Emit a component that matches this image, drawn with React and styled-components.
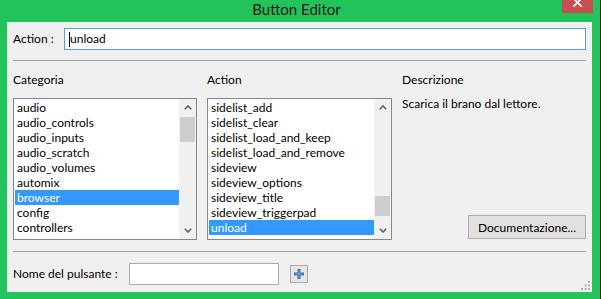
import React from 'react';
import styled, { createGlobalStyle } from 'styled-components';

const GlobalStyle = createGlobalStyle`
  html, body {
    margin: 0;
    padding: 0;
    background: #1e1e1e;
  }
  body {
    font-family: Lato, "Noto Sans", sans-serif;
    font-size: 12px;
    color: #000;
  }
`;

const categories = [
  'audio',
  'audio_controls',
  'audio_inputs',
  'audio_scratch',
  'audio_volumes',
  'automix',
  'browser',
  'config',
  'controllers',
];

const actions = [
  'sidelist_add',
  'sidelist_clear',
  'sidelist_load_and_keep',
  'sidelist_load_and_remove',
  'sideview',
  'sideview_options',
  'sideview_title',
  'sideview_triggerpad',
  'unload',
];

const Chevron = ({ down }) => (
  <svg width="8" height="5" viewBox="0 0 8 5">
    <path
      d={down ? 'M0.8 0.8 L4 4 L7.2 0.8' : 'M0.8 4.2 L4 1 L7.2 4.2'}
      fill="none"
      stroke="#606060"
      strokeWidth="1.6"
    />
  </svg>
);

const ListBox = ({ items, selected, thumbTop, thumbHeight }) => (
  <List>
    <Items>
      {items.map((it) => (
        <Item key={it} selected={it === selected}>
          {it}
        </Item>
      ))}
    </Items>
    <ScrollBar>
      <ArrowBtn>
        <Chevron />
      </ArrowBtn>
      <Track>
        <Thumb style={{ marginTop: thumbTop, height: thumbHeight }} />
      </Track>
      <ArrowBtn>
        <Chevron down />
      </ArrowBtn>
    </ScrollBar>
  </List>
);

const App = () => {
  return (
    <>
      <GlobalStyle />
      <Window>
        <TitleBar>
          <span />
          <Title>Button Editor</Title>
          <CloseBtn>
            <svg width="9" height="7" viewBox="0 0 9 7">
              <path d="M0.5 -1.5 L8.5 6.5 M8.5 -1.5 L0.5 6.5" stroke="#fff" strokeWidth="1.7" />
            </svg>
          </CloseBtn>
        </TitleBar>
        <Content>
          <Row>
            <Label width={51}>Action :</Label>
            <TextInput focused>
              <Caret />
              unload
            </TextInput>
          </Row>
          <Separator />
          <Columns>
            <Column>
              <ColLabel>Categoria</ColLabel>
              <ListBox items={categories} selected="browser" thumbTop={1} thumbHeight={25} />
            </Column>
            <Column>
              <ColLabel>Action</ColLabel>
              <ListBox items={actions} selected="unload" thumbTop={80} thumbHeight={20} />
            </Column>
            <Column>
              <ColLabel>Descrizione</ColLabel>
              <Description>Scarica il brano dal lettore.</Description>
              <Button>Documentazione...</Button>
            </Column>
          </Columns>
          <Separator />
          <Row>
            <Label width={116}>Nome del pulsante :</Label>
            <TextInput width={150} />
            <PlusBtn>
              <svg width="12" height="12" viewBox="0 0 12 12">
                <path d="M6 1 V11 M1 6 H11" stroke="#3f6fae" strokeWidth="3" />
                <path d="M6 2.5 V9.5 M2.5 6 H9.5" stroke="#7ea3d4" strokeWidth="1" />
              </svg>
            </PlusBtn>
          </Row>
          <Grip>
            <svg width="9" height="9" viewBox="0 0 9 9" fill="#b4b4b4">
              <rect x="7" y="0" width="2" height="2" />
              <rect x="3.5" y="3.5" width="2" height="2" />
              <rect x="7" y="3.5" width="2" height="2" />
              <rect x="0" y="7" width="2" height="2" />
              <rect x="3.5" y="7" width="2" height="2" />
              <rect x="7" y="7" width="2" height="2" />
            </svg>
          </Grip>
        </Content>
      </Window>
    </>
  );
};

export default App;

const Window = styled.div`
  width: 600px;
  height: 299px;
  box-sizing: border-box;
  background: #23c35b;
  padding: 0 8px 7px 7px;
  display: flex;
  flex-direction: column;
`;
const TitleBar = styled.div`
  height: 22px;
  flex-shrink: 0;
  display: grid;
  grid-template-columns: 1fr auto 1fr;
  align-items: start;
  margin: 0 -8px 0 -7px;
  padding-right: 7px;
`;
const Title = styled.div`
  font-size: 15px;
  line-height: 18px;
  color: #1a1a1a;
`;
const CloseBtn = styled.div`
  justify-self: end;
  width: 31px;
  height: 13px;
  background: #c75050;
  display: flex;
  justify-content: center;
  align-items: flex-start;
`;
const Content = styled.div`
  position: relative;
  flex: 1;
  background: #f0f0f0;
  padding: 6px 6px 7px 6px;
  display: flex;
  flex-direction: column;
`;
const Row = styled.div`
  display: flex;
  align-items: center;
  height: 22px;
`;
const Label = styled.div`
  width: ${(p) => p.width}px;
  flex-shrink: 0;
  line-height: 16px;
  white-space: nowrap;
`;
const TextInput = styled.div`
  box-sizing: border-box;
  height: 22px;
  ${(p) => (p.width ? `width: ${p.width}px;` : 'flex: 1;')}
  background: #fff;
  border: 1px solid ${(p) => (p.focused ? '#569de5' : '#abadb3')};
  display: flex;
  align-items: center;
  padding-left: 4px;
  line-height: 16px;
`;
const Caret = styled.span`
  display: inline-block;
  width: 1px;
  height: 15px;
  background: #000;
`;
const Separator = styled.div`
  height: 1px;
  background: #a0a0a0;
  margin-top: 11px;
  flex-shrink: 0;
  &:nth-of-type(2) {
    margin-top: 10px;
  }
  & + ${Row} {
    margin-top: 11px;
  }
`;
const Columns = styled.div`
  display: grid;
  grid-template-columns: 184px 185px 1fr;
  column-gap: 10px;
  margin-top: 11px;
`;
const Column = styled.div`
  display: flex;
  flex-direction: column;
  height: 168px;
`;
const ColLabel = styled.div`
  line-height: 16px;
  height: 16px;
  margin-bottom: 10px;
`;
const Description = styled.div`
  line-height: 16px;
  margin-top: -2px;
`;
const Button = styled.div`
  margin-top: auto;
  align-self: flex-end;
  box-sizing: border-box;
  width: 118px;
  height: 24px;
  margin-bottom: 1px;
  background: #e1e1e1;
  border: 1px solid #adadad;
  display: flex;
  align-items: center;
  justify-content: center;
`;
const List = styled.div`
  box-sizing: border-box;
  height: 142px;
  border: 1px solid #828790;
  background: #fff;
  display: flex;
  overflow: hidden;
`;
const Items = styled.div`
  flex: 1;
  padding: 1px 0 0 1px;
`;
const Item = styled.div`
  height: 15px;
  line-height: 15px;
  padding-left: 2px;
  white-space: nowrap;
  background: ${(p) => (p.selected ? '#3399ff' : 'transparent')};
  color: ${(p) => (p.selected ? '#fff' : '#000')};
`;
const ScrollBar = styled.div`
  width: 17px;
  flex-shrink: 0;
  background: #f0f0f0;
  display: flex;
  flex-direction: column;
`;
const ArrowBtn = styled.div`
  height: 17px;
  display: flex;
  align-items: center;
  justify-content: center;
`;
const Track = styled.div`
  flex: 1;
`;
const Thumb = styled.div`
  width: 15px;
  margin-left: 1px;
  background: #cdcdcd;
`;
const PlusBtn = styled.div`
  box-sizing: border-box;
  width: 18px;
  height: 18px;
  margin-left: 11px;
  background: #e6e6e6;
  border: 1px solid #adadad;
  display: flex;
  align-items: center;
  justify-content: center;
`;
const Grip = styled.div`
  position: absolute;
  right: 2px;
  bottom: 2px;
  line-height: 0;
`;
